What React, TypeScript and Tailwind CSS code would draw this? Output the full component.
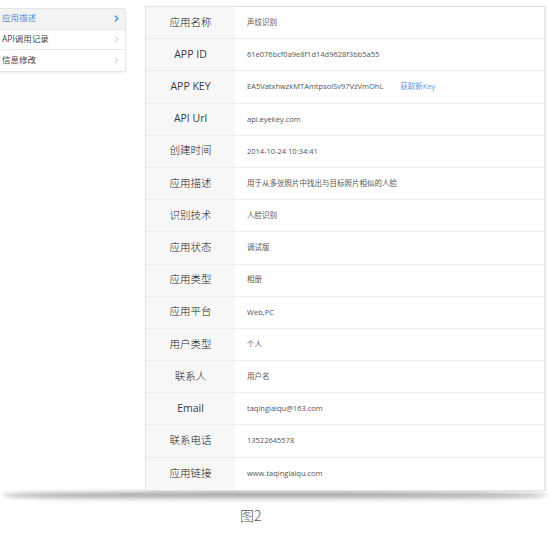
import React from 'react';

const rows: { label: string; value: string; link?: string }[] = [
  { label: '应用名称', value: '声纹识别' },
  { label: 'APP ID', value: '61e076bcf0a9e8f1d14d9628f3bb5a55' },
  { label: 'APP KEY', value: 'EA5VatxhwzkMTAmtpsolSv97VzVmOhL', link: '获取新Key' },
  { label: 'API Url', value: 'api.eyekey.com' },
  { label: '创建时间', value: '2014-10-24 10:34:41' },
  { label: '应用描述', value: '用于从多张照片中找出与目标照片相似的人脸' },
  { label: '识别技术', value: '人脸识别' },
  { label: '应用状态', value: '调试版' },
  { label: '应用类型', value: '相册' },
  { label: '应用平台', value: 'Web,PC' },
  { label: '用户类型', value: '个人' },
  { label: '联系人', value: '用户名' },
  { label: 'Email', value: 'taqinglaiqu@163.com' },
  { label: '联系电话', value: '13522645578' },
  { label: '应用链接', value: 'www.taqinglaiqu.com' },
];

const menu = [
  { name: '应用描述', active: true },
  { name: 'API调用记录', active: false },
  { name: '信息修改', active: false },
];

const font = { fontFamily: '"Open Sans", "Noto Sans CJK SC", sans-serif' };

export default function App() {
  return (
    <div className="relative w-[549px] h-[552px] bg-white overflow-hidden" style={font}>
      <div className="flex items-start pt-[6px]">
        {/* Sidebar */}
        <div className="mt-[2px] w-[126px] bg-white border border-[#e6e6e6] border-l-0 rounded-r-[3px] shadow-[0_1px_2px_rgba(0,0,0,0.06)]">
          {menu.map((m, i) => (
            <div
              key={m.name}
              className={`h-[20.5px] flex items-center justify-between pl-[2px] pr-[5px] text-[8.5px] ${
                i < menu.length - 1 ? 'border-b border-[#e9e9e9]' : ''
              } ${m.active ? 'bg-[#f3f3f3] text-[#4a8fd8]' : 'text-[#444]'}`}
            >
              <span>{m.name}</span>
              <svg width="5" height="7" viewBox="0 0 5 7" className="mr-[1px]">
                <path
                  d="M1 0.8 L3.8 3.5 L1 6.2"
                  fill="none"
                  stroke={m.active ? '#4a8fd8' : '#c4c4c4'}
                  strokeWidth={m.active ? 1.4 : 1}
                />
              </svg>
            </div>
          ))}
        </div>

        {/* Detail table */}
        <div className="ml-[19px] w-[400px] border border-[#e3e3e3] bg-white shadow-[1px_0_2px_rgba(0,0,0,0.08)] relative z-10">
          {rows.map((r, i) => (
            <div
              key={r.label}
              className={`flex h-[32.2px] ${i < rows.length - 1 ? 'border-b border-[#ececec]' : ''}`}
            >
              <div
                className={`w-[89px] shrink-0 bg-[#f7f7f7] flex items-center justify-center text-[10.5px] ${
                  /^[A-Za-z]/.test(r.label) ? 'font-normal text-[#3a3a3a]' : 'font-light text-[#222]'
                }`}
              >
                {r.label}
              </div>
              <div className="flex-1 flex items-center pl-[12px] text-[7.5px] text-[#555]">
                <span>{r.value}</span>
                {r.link && <span className="ml-[17px] text-[#5a9be0]">{r.link}</span>}
              </div>
            </div>
          ))}
        </div>
      </div>

      {/* Bottom page shadow */}
      <div className="mt-[1px] mx-[2px] h-[9px] bg-gradient-to-b from-[#7a7a7a] via-[#bdbdbd] to-transparent blur-[2px] rounded-[50%_50%_40%_40%/30%_30%_70%_70%]" />

      <div
        className="mt-[4px] pl-[240px] text-[14px] font-light text-[#555]"
        style={{ fontFamily: '"Noto Sans CJK SC", sans-serif' }}
      >
        图2
      </div>
    </div>
  );
}
